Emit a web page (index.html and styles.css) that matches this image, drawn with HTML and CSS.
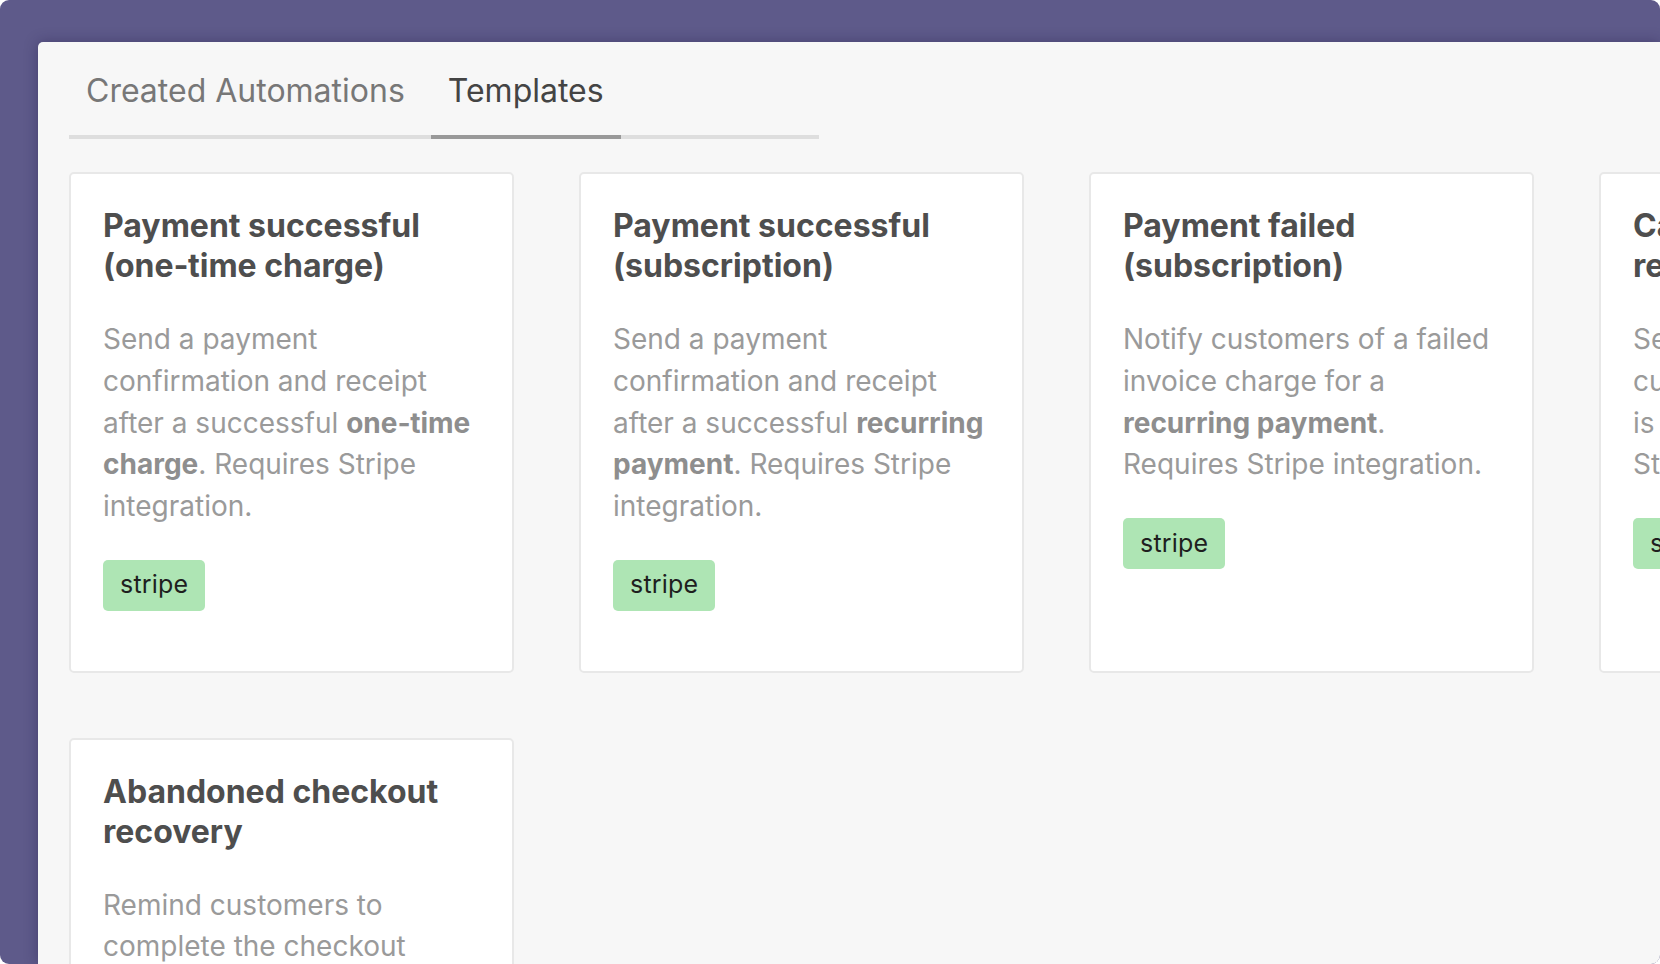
FILE: index.html
```html
<!DOCTYPE html>
<html lang="en">
<head>
<meta charset="utf-8">
<title>Automations – Templates</title>
<link rel="stylesheet" href="styles.css">
</head>
<body>
<div class="window">
  <main class="panel">
    <nav class="tabs">
      <a class="tab">Created Automations</a>
      <a class="tab tab-active">Templates</a>
    </nav>
    <section class="grid">
      <article class="card">
        <h2 class="card-title">Payment successful (one&#8209;time charge)</h2>
        <p class="card-desc">Send a payment confirmation and receipt after a successful <strong>one&#8209;time charge</strong>. Requires Stripe integration.</p>
        <span class="badge">stripe</span>
      </article>
      <article class="card">
        <h2 class="card-title">Payment successful (subscription)</h2>
        <p class="card-desc">Send a payment confirmation and receipt after a successful <strong>recurring payment</strong>. Requires Stripe integration.</p>
        <span class="badge">stripe</span>
      </article>
      <article class="card">
        <h2 class="card-title">Payment failed (subscription)</h2>
        <p class="card-desc">Notify customers of a failed invoice charge for a <strong>recurring payment</strong>. Requires Stripe integration.</p>
        <span class="badge">stripe</span>
      </article>
      <article class="card">
        <h2 class="card-title">Card expiring<br>reminder</h2>
        <p class="card-desc">Send a reminder to<br>customers whose card<br>is expiring. Requires<br>Stripe integration.</p>
        <span class="badge">stripe</span>
      </article>
      <article class="card">
        <h2 class="card-title">Abandoned checkout recovery</h2>
        <p class="card-desc">Remind customers to complete the checkout process after they leave a Stripe checkout session without paying. Requires Stripe integration.</p>
        <span class="badge">stripe</span>
      </article>
    </section>
  </main>
</div>
</body>
</html>
```

FILE: styles.css
```css
* { box-sizing: border-box; }

html, body {
  margin: 0;
  padding: 0;
  height: 100%;
  background: #ffffff;
  overflow: hidden;
}

body {
  font-family: Inter, "Noto Sans", "Liberation Sans", sans-serif;
}

.window {
  width: 1660px;
  height: 964px;
  background: #5e5a8a;
  border-radius: 9px;
  overflow: hidden;
  display: flex;
  flex-direction: column;
  padding: 42px 0 0 38px;
}

.panel {
  flex: 1;
  background: #f7f7f7;
  border-top-left-radius: 5px;
  box-shadow: 0 0 14px rgba(25, 18, 60, 0.35);
  padding: 29px 0 0 31px;
  overflow: hidden;
}

.tabs {
  display: flex;
  gap: 9px;
  width: 750px;
  border-bottom: 4px solid #dedede;
}

.tab {
  display: block;
  padding: 0 17px 24px;
  margin-bottom: -4px;
  border-bottom: 4px solid transparent;
  font-size: 32px;
  line-height: 40px;
  color: #777777;
  cursor: pointer;
}

.tab-active {
  color: #444444;
  border-bottom-color: #999999;
}

.grid {
  display: grid;
  grid-template-columns: repeat(4, 445px);
  column-gap: 65px;
  row-gap: 65px;
  margin-top: 33px;
}

.card {
  background: #ffffff;
  border: 2px solid #e8e8e8;
  border-radius: 5px;
  padding: 32px 32px 60px;
}

.card-title {
  margin: 0 0 33px;
  font-size: 32px;
  line-height: 40px;
  font-weight: 700;
  color: #4e4e4e;
}

.card-desc {
  margin: 0 0 32px;
  font-size: 28px;
  line-height: 41.8px;
  color: #9a9a9a;
}

.card-desc strong {
  font-weight: 700;
  color: #8e8e8e;
}

.badge {
  display: inline-block;
  padding: 4.5px 17px;
  background: #aee5b4;
  border-radius: 5px;
  font-size: 25px;
  line-height: 41.6px;
  letter-spacing: 0.2px;
  color: #1f1f1f;
}
```
